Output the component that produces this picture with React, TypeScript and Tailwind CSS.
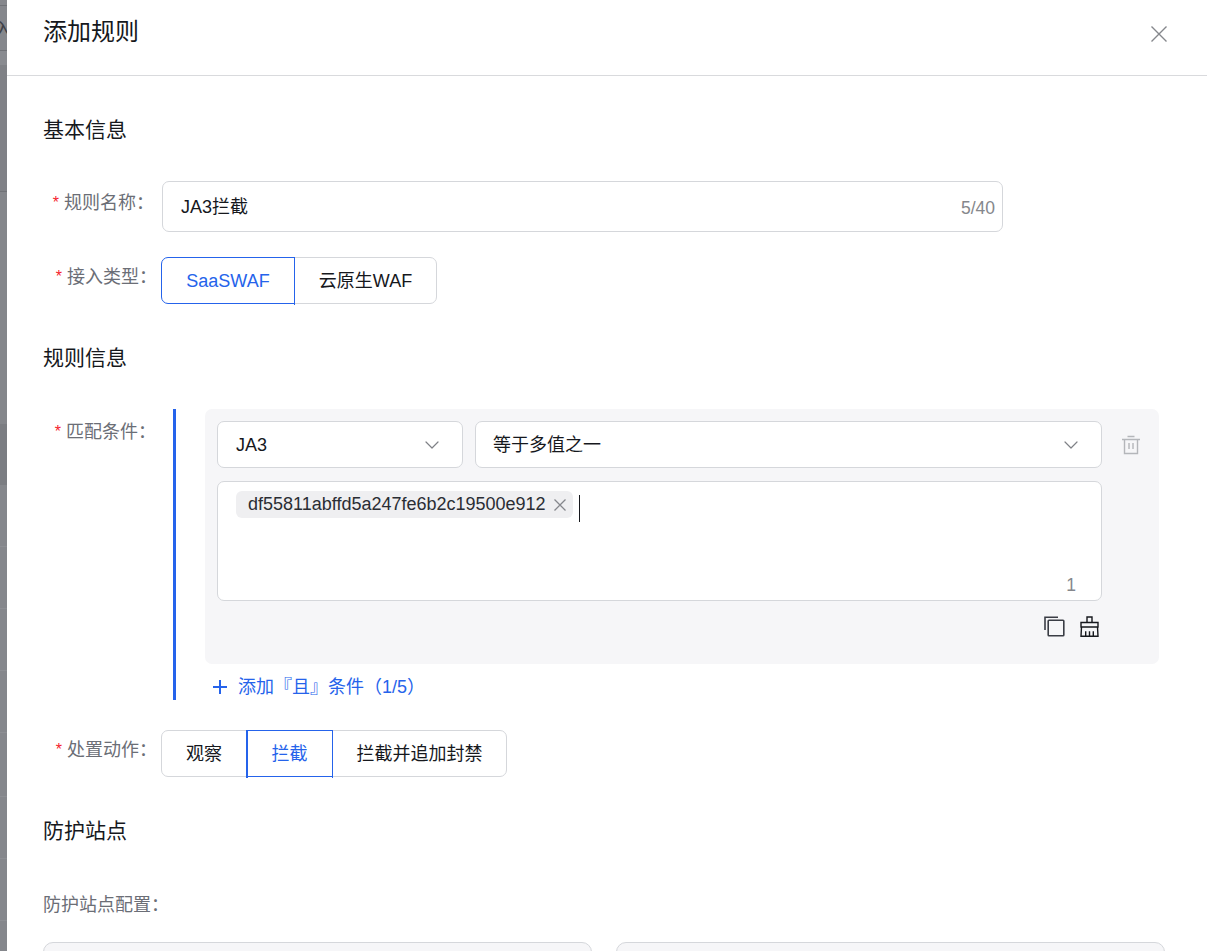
import { ChevronDown } from "lucide-react";

const fontStack = "font-['Liberation_Sans','Noto_Sans_CJK_SC',sans-serif]";

function Label({ text, className = "" }: { text: string; className?: string }) {
  return (
    <div className={`flex items-center text-[18px] leading-[24px] text-[#6b6e76] ${className}`}>
      <span className="mr-[5px] text-[16px] text-[#f5222d]">*</span>
      <span>{text}：</span>
    </div>
  );
}

function Seg({
  text,
  active,
  leftBar,
  className = "",
}: {
  text: string;
  active?: boolean;
  leftBar?: boolean;
  className?: string;
}) {
  return (
    <div
      className={`relative flex h-[47px] items-center justify-center border pt-[2px] text-[18px] ${
        active
          ? "z-10 border-[#2563eb] text-[#2563eb] after:absolute after:-top-px after:-right-px after:-bottom-[2px] after:w-[1.5px] after:bg-[#2563eb]"
          : "border-[#d5d7db] text-[#16181d]"
      } ${leftBar ? "before:absolute before:-top-px before:-left-px before:-bottom-[2px] before:w-[1.5px] before:bg-[#2563eb]" : ""} ${className}`}
    >
      {text}
    </div>
  );
}

function Strip() {
  return (
    <div className="flex w-[7px] shrink-0 flex-col overflow-hidden bg-[#85878c]">
      <div className="h-[6px] border-b border-[#707277]" />
      <div className="h-[45px] overflow-hidden border-b border-[#707277] pt-[12px]">
        <span className="-ml-[6px] block w-[24px] text-[18px] leading-[24px] text-[#3f4147]">入</span>
      </div>
      <div className="h-[14px] bg-[#898b90]" />
      <div className="h-[127px] border-b border-[#707277] bg-[#7f8186]" />
      <div className="h-[232px] bg-[#84868b]" />
      <div className="h-[61px] bg-[#7b7d82]" />
      <div className="h-[62px] border-b border-[#8d8f94]" />
      <div className="h-[62px] border-b border-[#8d8f94]" />
      <div className="h-[62px] border-b border-[#8d8f94]" />
      <div className="h-[62px] border-b border-[#8d8f94]" />
      <div className="h-[64px] border-b border-[#8d8f94]" />
      <div className="h-[62px] border-b border-[#8d8f94]" />
      <div className="h-[62px] border-b border-[#8d8f94]" />
      <div className="flex-1" />
    </div>
  );
}

export default function App() {
  return (
    <div className={`flex h-[951px] w-[1207px] overflow-hidden bg-white ${fontStack}`}>
      <Strip />

      <div className="flex min-w-0 flex-1 flex-col">
        <header className="flex h-[76px] shrink-0 items-start justify-between border-b border-[#d9dadd] pl-[36px] pr-[39px] pt-[16px]">
          <h1 className="text-[24px] leading-[32px] font-normal text-[#16181d]">添加规则</h1>
          <svg className="mt-[9px] h-[18px] w-[18px] text-[#85878c]" viewBox="0 0 18 18" fill="none" stroke="currentColor" strokeWidth="1.4">
            <path d="M1.5 1.5l15 15M16.5 1.5l-15 15" />
          </svg>
        </header>

        <main className="flex flex-col pl-[36px] pr-[42px]">
          <h2 className="mt-[40px] text-[21px] leading-[28px] font-normal text-[#16181d]">基本信息</h2>

          <div className="mt-[37px] flex items-start">
            <Label text="规则名称" className="w-[119px] justify-end pr-[8px] pt-[10px]" />
            <div className="flex h-[51px] w-[841px] items-center justify-between rounded-[7px] border border-[#d5d7db] pl-[18px] pr-[7px]">
              <span className="pt-[2px] text-[18px] text-[#16181d]">JA3拦截</span>
              <span className="mt-[3px] text-[17.5px] text-[#85878c]">5/40</span>
            </div>
          </div>

          <div className="mt-[25px] flex items-start">
            <Label text="接入类型" className="w-[118px] justify-end pr-[4px] pt-[8px]" />
            <div className="flex">
              <Seg text="SaaSWAF" active className="w-[134px] rounded-l-[7px]" />
              <Seg text="云原生WAF" className="-ml-px w-[143px] rounded-r-[7px]" />
            </div>
          </div>

          <h2 className="mt-[40px] text-[21px] leading-[28px] font-normal text-[#16181d]">规则信息</h2>

          <div className="mt-[37px] flex items-start">
            <Label text="匹配条件" className="w-[120px] justify-end pr-[7px] pt-[11px]" />
            <div className="ml-[10px] flex w-[986px] flex-col border-l-[3px] border-[#2563eb] pl-[29px]">
              <div className="flex h-[255px] w-[954px] flex-col rounded-[7px] bg-[#f6f6f8] px-[12px] pt-[12px]">
                <div className="flex items-center gap-[12px]">
                  <div className="flex h-[47px] w-[246px] items-center justify-between rounded-[7px] border border-[#d5d7db] bg-white pl-[18px] pr-[18px]">
                    <span className="pt-[2px] text-[18px] text-[#16181d]">JA3</span>
                    <ChevronDown className="h-[24px] w-[24px] text-[#7f8186]" strokeWidth={1.2} />
                  </div>
                  <div className="flex h-[47px] w-[627px] items-center justify-between rounded-[7px] border border-[#d5d7db] bg-white pl-[17px] pr-[18px]">
                    <span className="pt-[2px] text-[18px] text-[#16181d]">等于多值之一</span>
                    <ChevronDown className="h-[24px] w-[24px] text-[#7f8186]" strokeWidth={1.2} />
                  </div>
                  <svg className="ml-[7px] h-[20px] w-[20px] text-[#b4b6ba]" viewBox="0 0 20 20" fill="none" stroke="currentColor" strokeWidth="1.4">
                    <path d="M1 4.5h18M6.5 1.5h7M3.5 4.5v14h13v-14M8 8v6M12 8v6" />
                  </svg>
                </div>
                <div className="mt-[13px] flex h-[120px] w-[885px] flex-col rounded-[7px] border border-[#d5d7db] bg-white pl-[18px] pr-[25px] pt-[9px]">
                  <div className="flex items-start">
                    <div className="flex h-[27px] items-center rounded-[6px] bg-[#efeff1] pl-[12px] pr-[6px]">
                      <span className="text-[18px] text-[#2a2d34]">df55811abffd5a247fe6b2c19500e912</span>
                      <svg className="ml-[7px] h-[14px] w-[14px] text-[#85878c]" viewBox="0 0 14 14" fill="none" stroke="currentColor" strokeWidth="1.3">
                        <path d="M1.5 1.5l11 11M12.5 1.5l-11 11" />
                      </svg>
                    </div>
                    <div className="ml-[6px] mt-[4px] h-[27px] w-px bg-[#16181d]" />
                  </div>
                  <div className="mt-auto mb-[4px] text-right text-[17.5px] leading-[22px] text-[#85878c]">1</div>
                </div>
                <div className="mt-[15px] flex items-start justify-end gap-[15px] pr-[48px]">
                  <svg className="h-[21px] w-[21px] text-[#3a3d45]" viewBox="0 0 21 21" fill="none" stroke="currentColor" strokeWidth="1.6">
                    <path d="M1 14V1.2H14" />
                    <rect x="4.2" y="4.2" width="15.6" height="15.6" rx="0.8" />
                  </svg>
                  <svg className="h-[21px] w-[19px] text-[#16181d]" viewBox="0 0 19 21" fill="none" stroke="currentColor" strokeWidth="1.4">
                    <path d="M7 6.5V1h5v5.5M1 6.5h17v4.5H1zM1.5 11L1 20.3h17L17.5 11M5.7 20.3v-5M9.5 20.3v-5M13.3 20.3v-5" />
                  </svg>
                </div>
              </div>
              <div className="flex h-[36px] items-center pl-[7px] pt-[9px] text-[#2563eb]">
                <svg className="h-[16px] w-[16px]" viewBox="0 0 16 16" fill="none" stroke="currentColor" strokeWidth="2">
                  <path d="M8 1v14M1 8h14" />
                </svg>
                <span className="ml-[10px] pt-[2px] text-[18px]">添加『且』条件（1/5）</span>
              </div>
            </div>
          </div>

          <div className="mt-[30px] flex items-start">
            <Label text="处置动作" className="w-[118px] justify-end pr-[4px] pt-[8px]" />
            <div className="flex">
              <Seg text="观察" className="w-[86px] rounded-l-[7px]" />
              <Seg text="拦截" active leftBar className="-ml-px w-[87px]" />
              <Seg text="拦截并追加封禁" className="-ml-px w-[175px] rounded-r-[7px]" />
            </div>
          </div>

          <h2 className="mt-[40px] text-[21px] leading-[28px] font-normal text-[#16181d]">防护站点</h2>

          <div className="mt-[48px] text-[18px] leading-[24px] text-[#6b6e76]">防护站点配置：</div>

          <div className="mt-[25px] flex gap-[24px]">
            <div className="h-[60px] w-[549px] rounded-t-[10px] border border-[#d5d7db] bg-[#f6f6f8]" />
            <div className="h-[60px] w-[549px] rounded-t-[10px] border border-[#d5d7db] bg-[#f6f6f8]" />
          </div>
        </main>
      </div>
    </div>
  );
}
